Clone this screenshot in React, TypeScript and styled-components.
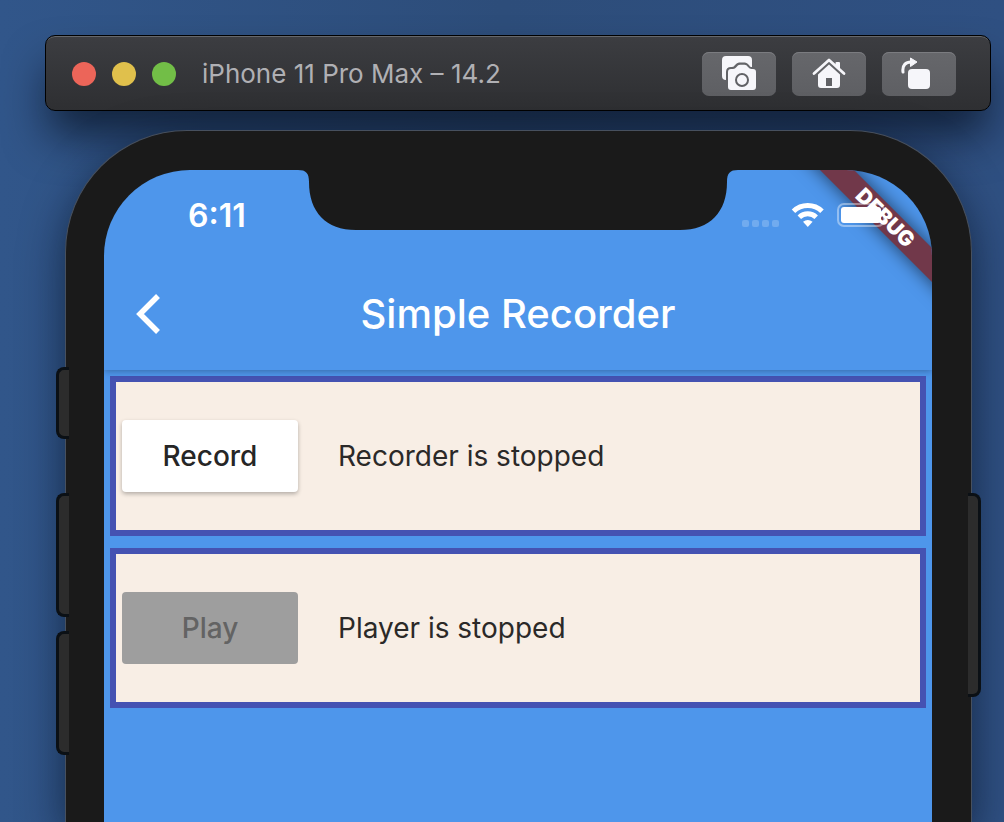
import React from 'react';
import styled, { createGlobalStyle } from 'styled-components';

const GlobalStyle = createGlobalStyle`
  * { box-sizing: border-box; }
  body {
    margin: 0;
    font-family: Inter, 'Liberation Sans', sans-serif;
    background: #2f5080;
  }
  button { font-family: inherit; }
`;

const Desktop = styled.main`
  display: flex;
  flex-direction: column;
  gap: 19px;
  min-height: 100vh;
  padding: 35px 13px 0 45px;
  overflow: hidden;
  background: linear-gradient(90deg, #31568a 0%, #2d4d7a 50%, #2f5082 100%);
`;

const TitleBar = styled.header`
  display: flex;
  align-items: center;
  height: 76px;
  padding: 2px 34px 0 26px;
  border: 1px solid #000;
  border-radius: 10px;
  background: linear-gradient(#3c3d41, #2e2f32);
  box-shadow: inset 0 2px 0 -1px #66686b, 0 28px 44px -4px rgba(0, 6, 16, 0.62);
`;

const Lights = styled.div`
  display: flex;
  gap: 16px;
`;

const Light = styled.button<{ $color: string }>`
  width: 24px;
  height: 24px;
  padding: 0;
  border: 0;
  border-radius: 50%;
  background: ${(p) => p.$color};
`;

const WindowTitle = styled.h1`
  flex: 1;
  margin: 0 0 0 26px;
  font-size: 26px;
  line-height: 32px;
  font-weight: 400;
  color: #b0b0b4;
  white-space: nowrap;
`;

const Tools = styled.div`
  display: flex;
  gap: 16px;
`;

const ToolButton = styled.button`
  display: flex;
  align-items: center;
  justify-content: center;
  width: 74px;
  height: 44px;
  padding: 0;
  border: 0;
  border-radius: 7px;
  background: linear-gradient(#66676b, #5e5f63);
  box-shadow: inset 0 1px 0 #7b7c80;

  svg { display: block; }
`;

const Phone = styled.section`
  position: relative;
  display: flex;
  flex: 1;
  flex-direction: column;
  margin: 0 19px 0 20px;
  padding: 39px 39px 0 38px;
  border: 1px solid #47505e;
  border-bottom: 0;
  border-radius: 122px 122px 0 0;
  background: #1a1a1a;
  box-shadow: 0 14px 44px rgba(4, 12, 28, 0.6);
`;

const SideKey = styled.span<{ $side: 'left' | 'right'; $top: number; $length: number }>`
  position: absolute;
  top: ${(p) => p.$top}px;
  ${(p) => p.$side}: -10px;
  width: 13px;
  height: ${(p) => p.$length}px;
  border: 3px solid #0b1015;
  border-${(p) => (p.$side === 'left' ? 'right' : 'left')}: 0;
  border-radius: ${(p) => (p.$side === 'left' ? '8px 0 0 8px' : '0 8px 8px 0')};
  background: #2c2c2c;
`;

const Screen = styled.div`
  position: relative;
  display: flex;
  flex: 1;
  flex-direction: column;
  border-radius: 86px 86px 0 0;
  overflow: hidden;
  background: #4e96eb;
`;

const Notch = styled.svg`
  position: absolute;
  top: 0;
  left: 50%;
  transform: translateX(-50%);
`;

const Banner = styled.div`
  position: absolute;
  top: 36px;
  right: -103px;
  width: 300px;
  height: 24px;
  transform: rotate(45deg);
  background: #71384a;
  box-shadow: 0 0 18px rgba(0, 0, 0, 0.6);
  color: #fff;
  font-size: 21px;
  line-height: 24px;
  font-weight: 900;
  text-align: center;
`;

const StatusBar = styled.div`
  position: relative;
  display: flex;
  justify-content: space-between;
  height: 88px;
  padding: 30px 48px 0 84px;
`;

const Clock = styled.time`
  font-size: 32px;
  line-height: 32px;
  font-weight: 600;
  color: #fff;
`;

const AppHead = styled.div`
  position: relative;
  z-index: 1;
  box-shadow: 0 1px 7px rgba(0, 0, 0, 0.3);
`;

const AppBar = styled.header`
  display: grid;
  grid-template-columns: 88px 1fr 88px;
  align-items: center;
  height: 112px;
`;

const BackButton = styled.button`
  display: flex;
  align-items: center;
  justify-content: center;
  height: 88px;
  padding: 0;
  border: 0;
  background: none;
`;

const AppTitle = styled.h2`
  margin: 0;
  font-size: 40px;
  line-height: 48px;
  font-weight: 500;
  color: #fff;
  text-align: center;
  white-space: nowrap;
`;

const Body = styled.div`
  display: flex;
  flex-direction: column;
  gap: 12px;
  padding: 6px;
`;

const Panel = styled.section`
  display: flex;
  align-items: center;
  gap: 40px;
  height: 160px;
  padding: 0 6px;
  border: 6px solid #4552b2;
  background: #f8eee5;
`;

const RaisedButton = styled.button`
  width: 176px;
  height: 72px;
  padding: 0;
  border: 0;
  border-radius: 4px;
  background: #fff;
  box-shadow: 0 2px 4px rgba(0, 0, 0, 0.28);
  color: #262626;
  font-size: 28px;
  font-weight: 500;

  &:disabled {
    background: #9e9e9e;
    box-shadow: none;
    color: #636363;
  }
`;

const StatusText = styled.p`
  margin: 0;
  font-size: 28px;
  line-height: 40px;
  color: #2b2928;
  white-space: nowrap;
`;

const CameraIcon = () => (
  <svg width="36" height="36" viewBox="0 0 36 36" aria-hidden="true">
    <path fill="#f6f6fa" d="M5 0H27Q31 0 31 4V11H30Q29 11 28 9Q26 6.500 24 6.500H18Q16 6.500 14 9Q13 11 11 11H10Q5 11 5 16V24Q1 24 1 20V4Q1 0 5 0Z" />
    <path
      fill="#f6f6fa"
      fillRule="evenodd"
      d="M10 13H12Q14 13 15.500 11Q17 8.700 19 8.700H23.500Q25.500 8.700 27 11Q28.500 13 30.500 13H32Q35 13 35 16V31Q35 34 32 34H10Q7 34 7 31V16Q7 13 10 13ZM21 17A7 7 0 1 0 21 31A7 7 0 1 0 21 17ZM21 19A5 5 0 1 1 21 29A5 5 0 1 1 21 19Z"
    />
  </svg>
);

const HomeIcon = () => (
  <svg width="34" height="32" viewBox="0 0 34 32" aria-hidden="true">
    <path fill="none" stroke="#f6f6fa" strokeWidth="2.800" strokeLinecap="round" strokeLinejoin="round" d="M2 15.500L17 2L32 15.500" />
    <path fill="#f6f6fa" d="M23.500 5Q23.500 4 24.500 4H27Q28 4 28 5V12L23.500 8Z" />
    <path fill="#f6f6fa" fillRule="evenodd" d="M17 6.500L28 16.500V27Q28 30 25 30H9Q6 30 6 27V16.500ZM14 20V28H20V20Z" />
  </svg>
);

const RotateIcon = () => (
  <svg width="36" height="34" viewBox="0 0 36 34" aria-hidden="true">
    <rect x="7" y="12" width="22" height="20" rx="4" fill="#f6f6fa" />
    <path fill="none" stroke="#f6f6fa" strokeWidth="3" strokeLinecap="round" d="M2 15C1 8 5 5 10 5" />
    <path fill="#f6f6fa" stroke="#f6f6fa" strokeLinejoin="round" d="M9.500 1L16 5L9.500 9.500Z" />
  </svg>
);

const StatusIcons = () => (
  <svg width="146" height="30" viewBox="738 200 146 30" overflow="visible" aria-label="No signal, Wi-Fi, full battery" role="img">
    <g fill="#fff" fillOpacity="0.2">
      <rect x="742" y="220" width="7" height="7" rx="2" />
      <rect x="752" y="220" width="7" height="7" rx="2" />
      <rect x="762" y="220" width="7" height="7" rx="2" />
      <rect x="772" y="220" width="7" height="7" rx="2" />
    </g>
    <g fill="none" stroke="#fff" strokeWidth="5">
      <path d="M793.500 211.200A20.500 20.500 0 0 1 822 211.200" />
      <path d="M799.300 217.200A12.200 12.200 0 0 1 816.200 217.200" />
    </g>
    <path fill="#fff" d="M807.800 227L803 221.800Q807.800 218 812.600 221.800Z" />
    <rect x="838" y="204" width="46" height="22" rx="6" fill="none" stroke="#fff" strokeOpacity="0.4" strokeWidth="2" />
    <rect x="841" y="207" width="40" height="16" rx="3" fill="#fff" />
  </svg>
);

export default function App() {
  return (
    <>
      <GlobalStyle />
      <Desktop>
        <TitleBar>
          <Lights>
            <Light $color="#ec6559" aria-label="Close" />
            <Light $color="#e0c04c" aria-label="Minimize" />
            <Light $color="#72be47" aria-label="Zoom" />
          </Lights>
          <WindowTitle>iPhone 11 Pro Max – 14.2</WindowTitle>
          <Tools>
            <ToolButton aria-label="Take screenshot"><CameraIcon /></ToolButton>
            <ToolButton aria-label="Home"><HomeIcon /></ToolButton>
            <ToolButton aria-label="Rotate"><RotateIcon /></ToolButton>
          </Tools>
        </TitleBar>
        <Phone>
          <SideKey $side="left" $top={236} $length={72} />
          <SideKey $side="left" $top={362} $length={124} />
          <SideKey $side="left" $top={500} $length={124} />
          <SideKey $side="right" $top={362} $length={204} />
          <Screen>
            <AppHead>
              <Banner>DEBUG</Banner>
              <Notch width="440" height="60" viewBox="0 0 440 60" aria-hidden="true">
                <path fill="#1a1a1a" d="M0 0C8 0 11 3 11 12C11 42 28 60 58 60H382C412 60 429 42 429 12C429 3 432 0 440 0Z" />
              </Notch>
              <StatusBar>
                <Clock>6:11</Clock>
                <StatusIcons />
              </StatusBar>
              <AppBar>
                <BackButton aria-label="Back">
                  <svg width="24" height="40" viewBox="0 0 24 40" aria-hidden="true">
                    <path fill="none" stroke="#fff" strokeWidth="5.500" d="M22 2L4 20L22 38" />
                  </svg>
                </BackButton>
                <AppTitle>Simple Recorder</AppTitle>
              </AppBar>
            </AppHead>
            <Body>
              <Panel>
                <RaisedButton>Record</RaisedButton>
                <StatusText>Recorder is stopped</StatusText>
              </Panel>
              <Panel>
                <RaisedButton disabled>Play</RaisedButton>
                <StatusText>Player is stopped</StatusText>
              </Panel>
            </Body>
          </Screen>
        </Phone>
      </Desktop>
    </>
  );
}
